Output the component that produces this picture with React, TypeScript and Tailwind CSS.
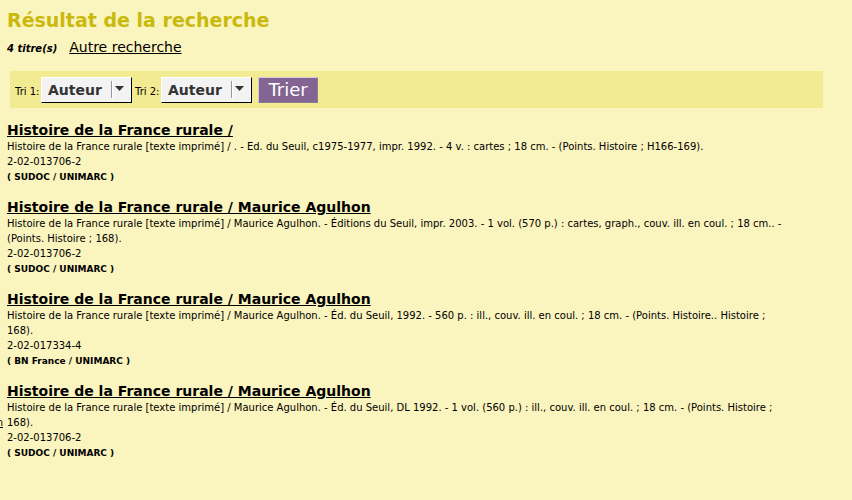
type Entry = { title: string; text: string; isbn: string; source: string };

const entries: Entry[] = [
  {
    title: "Histoire de la France rurale /",
    text: "Histoire de la France rurale [texte imprimé] / . - Ed. du Seuil, c1975-1977, impr. 1992. - 4 v. : cartes ; 18 cm. - (Points. Histoire ; H166-169).",
    isbn: "2-02-013706-2",
    source: "( SUDOC / UNIMARC )",
  },
  {
    title: "Histoire de la France rurale / Maurice Agulhon",
    text: "Histoire de la France rurale [texte imprimé] / Maurice Agulhon. - Éditions du Seuil, impr. 2003. - 1 vol. (570 p.) : cartes, graph., couv. ill. en coul. ; 18 cm.. - (Points. Histoire ; 168).",
    isbn: "2-02-013706-2",
    source: "( SUDOC / UNIMARC )",
  },
  {
    title: "Histoire de la France rurale / Maurice Agulhon",
    text: "Histoire de la France rurale [texte imprimé] / Maurice Agulhon. - Éd. du Seuil, 1992. - 560 p. : ill., couv. ill. en coul. ; 18 cm. - (Points. Histoire.. Histoire ; 168).",
    isbn: "2-02-017334-4",
    source: "( BN France / UNIMARC )",
  },
  {
    title: "Histoire de la France rurale / Maurice Agulhon",
    text: "Histoire de la France rurale [texte imprimé] / Maurice Agulhon. - Éd. du Seuil, DL 1992. - 1 vol. (560 p.) : ill., couv. ill. en coul. ; 18 cm. - (Points. Histoire ; 168).",
    isbn: "2-02-013706-2",
    source: "( SUDOC / UNIMARC )",
  },
];

function SortSelect({ id, label }: { id: string; label: string }) {
  return (
    <div className="flex items-center">
      <label htmlFor={id} className="w-[26px] pt-0.5 text-[10px] whitespace-nowrap">{label}</label>
      <div className="relative">
        <select
          id={id}
          className="block h-[26px] w-[91px] appearance-none rounded-none border border-t-white border-r-black border-b-black border-l-white bg-[#f3f3f3] pl-1.5 text-[14px] leading-5 font-bold text-[#333]"
        >
          <option>Auteur</option>
          <option>Titre</option>
          <option>Date</option>
        </select>
        <span className="pointer-events-none absolute top-1 right-[19px] h-[17px] w-0.5 border-r border-l border-r-white border-l-[#999]" />
        <svg className="pointer-events-none absolute top-[9px] right-2" width="9" height="5" viewBox="0 0 9 5" aria-hidden="true">
          <path d="M0 0h9L4.5 5z" fill="#333" />
        </svg>
      </div>
    </div>
  );
}

export default function App() {
  return (
    <main className="relative min-h-screen overflow-hidden bg-[#faf4be] pt-1.5 pr-[29px] pl-[7px] font-['DejaVu_Sans',sans-serif] text-black">
      <h1 className="text-[19px] leading-7 font-bold text-[#c9b90c]">Résultat de la recherche</h1>
      <div className="flex items-baseline gap-3 leading-[26px]">
        <span className="text-[10px] font-bold italic">4 titre(s)</span>
        <a href="#recherche" className="text-[14px] underline">Autre recherche</a>
      </div>
      <form className="mt-[9px] ml-[3px] flex h-[37px] items-center bg-[#f3eb91] pl-[5px]">
        <div className="flex gap-[3px] pt-px">
          <SortSelect id="tri1" label="Tri 1:" />
          <SortSelect id="tri2" label="Tri 2:" />
        </div>
        <button type="button" className="ml-1.5 h-[26px] w-[60px] border border-t-[#d5cbdc] border-r-[#8a8090] border-b-[#8a8090] border-l-[#d5cbdc] bg-[#836493] text-[18px] leading-6 text-white">
          Trier
        </button>
      </form>
      <ol className="mt-3.5 flex flex-col gap-[13px]">
        {entries.map((e, i) => (
          <li key={i} className="relative text-[10px] leading-[15px]">
            <a href={`#notice-${i + 1}`} className="block text-[14px] leading-[17px] font-bold">
              <span className="underline">{e.title}</span>
            </a>
            <p className="pr-8">{e.text}</p>
            <p>{e.isbn}</p>
            <p className="text-[9px] leading-[17px] font-bold">{e.source}</p>
            {i === 3 && (
              <a href="#bottom" className="absolute top-8 right-full mr-1 underline">n</a>
            )}
          </li>
        ))}
      </ol>
    </main>
  );
}
